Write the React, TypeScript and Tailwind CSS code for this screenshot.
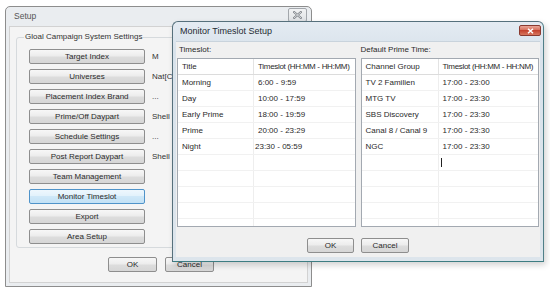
import React from 'react';

const sans = "font-['Liberation_Sans',Arial,sans-serif]";

const setupRows: { label: string; value?: string; focused?: boolean }[] = [
  { label: 'Target Index', value: 'M' },
  { label: 'Universes', value: 'Nat[C' },
  { label: 'Placement Index Brand', value: '...' },
  { label: 'Prime/Off Daypart', value: 'Shell' },
  { label: 'Schedule Settings', value: '...' },
  { label: 'Post Report Daypart', value: 'Shell' },
  { label: 'Team Management' },
  { label: 'Monitor Timeslot', focused: true },
  { label: 'Export' },
  { label: 'Area Setup' },
];

const timeslots = [
  ['Morning', '6:00 - 9:59'],
  ['Day', '10:00 - 17:59'],
  ['Early Prime', '18:00 - 19:59'],
  ['Prime', '20:00 - 23:29'],
  ['Night', '23:30 - 05:59'],
];

const primeTimes = [
  ['TV 2 Familien', '17:00 - 23:00'],
  ['MTG TV', '17:00 - 23:30'],
  ['SBS Discovery', '17:00 - 23:30'],
  ['Canal 8 / Canal 9', '17:00 - 23:30'],
  ['NGC', '17:00 - 23:30'],
];

const WinButton: React.FC<{ label: string; className?: string; focused?: boolean }> = ({ label, className = '', focused }) => (
  <div
    className={`h-[15px] shrink-0 flex items-center justify-center rounded-[2px] border text-[8px] leading-none text-[#2a2a2a] ${
      focused
        ? 'border-[#4f93c9] bg-[linear-gradient(#eef7fd,#e1f1fb_50%,#cfe8f8_50%,#c2e1f5)]'
        : 'border-[#8e8e8e] bg-[linear-gradient(#f7f7f7,#ececec_48%,#dddddd_52%,#d6d6d6)]'
    } ${className}`}
  >
    {label}
  </div>
);

const GridTable: React.FC<{
  headers: [string, string];
  rows: string[][];
  firstWidth: string;
  editRow?: number;
  caretRow?: number;
}> = ({ headers, rows, firstWidth, editRow, caretRow }) => {
  const filled = [...rows, ...Array.from({ length: 10 - rows.length }, () => ['', ''])];
  return (
    <div className="h-[169px] bg-white border border-[#a3a9b1] overflow-hidden flex flex-col text-[8px] text-[#2a2a2a]">
      <div className="h-[16px] shrink-0 flex border-b border-[#dcdcdc]">
        <div className={`${firstWidth} shrink-0 border-r border-[#e3e3e3] pl-[4px] flex items-center`}>{headers[0]}</div>
        <div className="flex-1 min-w-0 pl-[4px] flex items-center whitespace-nowrap tracking-[-0.3px]">{headers[1]}</div>
      </div>
      {filled.map((r, i) => (
        <div key={i} className="h-[16px] shrink-0 flex border-b border-[#f1f1f1]">
          <div className={`${firstWidth} shrink-0 border-r border-[#eeeeee] pl-[4px] flex items-center`}>{r[0]}</div>
          <div className={`flex-1 min-w-0 flex items-center ${i === editRow ? 'pl-[1px]' : 'pl-[4px]'}`}>
            {r[1]}
            {i === caretRow && <span className="ml-[-2px] w-px h-[9px] bg-[#222]" />}
          </div>
        </div>
      ))}
    </div>
  );
};

export default function App() {
  return (
    <div className={`relative w-[550px] h-[292px] bg-white overflow-hidden ${sans}`}>
      {/* Setup dialog (inactive, behind) */}
      <div className="absolute left-[5px] top-[6px] w-[307px] h-[281px] border border-[#8d8d8d] rounded-t-[5px] bg-[#eaedf0] flex flex-col px-[3px] pb-[3px]">
        <div className="h-[19px] shrink-0 flex items-start justify-between">
          <span className="pl-[5px] pt-[5px] text-[8.5px] leading-none text-[#555]">Setup</span>
          <div className="mr-[1px] mt-[1px] w-[19px] h-[14px] rounded-[2px] border border-[#a3a7ac] bg-[linear-gradient(#f2f3f4,#dfe2e5)] flex items-center justify-center">
            <svg width="9" height="8" viewBox="0 0 9 8">
              <path d="M1 1 L8 7 M8 1 L1 7" stroke="#7c8086" strokeWidth="2.2" strokeLinecap="square" />
              <path d="M1 1 L8 7 M8 1 L1 7" stroke="#eef0f2" strokeWidth="0.8" strokeLinecap="square" />
            </svg>
          </div>
        </div>
        <div className="flex-1 bg-[#f4f4f4] border border-[#d2d2d2] flex flex-col">
          <div className="relative mt-[10px] ml-[6px] mr-[6px] border border-[#d6dadd] rounded-[3px] pt-[11px] pb-[3px] pl-[12px] flex flex-col gap-[5px]">
            <span className="absolute left-[7px] top-[-6px] px-[1px] bg-[#f4f4f4] text-[8px] leading-[10px] text-[#333]">
              Gloal Campaign System Settings
            </span>
            {setupRows.map((r) => (
              <div key={r.label} className="flex items-center">
                <WinButton label={r.label} focused={r.focused} className="w-[116px]" />
                {r.value && <span className="ml-[7px] text-[8px] text-[#333] whitespace-nowrap">{r.value}</span>}
              </div>
            ))}
          </div>
          <div className="mt-[9px] pl-[98px] flex gap-[8px]">
            <WinButton label="OK" className="w-[49px]" />
            <WinButton label="Cancel" className="w-[49px]" />
          </div>
        </div>
      </div>

      {/* Monitor Timeslot Setup dialog (active) */}
      <div className="absolute left-[172px] top-[21px] w-[372px] h-[241px] border border-[#56707c] border-b-[#3d7d82] border-r-[#4f7f88] rounded-t-[6px] bg-[linear-gradient(#e4ebf2,#d8e2eb_30px,#dde5ec)] flex flex-col px-[3px] pb-[4px] shadow-[2px_3px_6px_rgba(0,0,0,0.18)]">
        <div className="h-[19px] shrink-0 flex items-start justify-between">
          <span className="pl-[4px] pt-[5px] text-[9px] leading-none text-[#1f2a33]">Monitor Timeslot Setup</span>
          <div className="mt-[3px] mr-[-1px] w-[22px] h-[11px] rounded-[2px] border border-[#8a3a30] bg-[linear-gradient(#e9a597,#d66b57_50%,#c4432f_50%,#d8765e)] flex items-center justify-center">
            <svg width="7" height="6" viewBox="0 0 7 6">
              <path d="M1 0.8 L6 5.2 M6 0.8 L1 5.2" stroke="#fff" strokeWidth="1.5" />
            </svg>
          </div>
        </div>
        <div className="flex-1 bg-[#f0f0f0] border-t border-[#c9d3dc] flex flex-col px-[1px]">
          <div className="flex gap-[5px] pt-[3px]">
            <div className="flex-1 min-w-0 flex flex-col">
              <span className="ml-[2px] h-[13px] text-[8px] leading-[10px] text-[#2a2a2a]">Timeslot:</span>
              <GridTable headers={['Title', 'Timeslot (HH:MM - HH:MM)']} rows={timeslots} firstWidth="w-[76px]" editRow={4} />
            </div>
            <div className="flex-1 min-w-0 flex flex-col">
              <span className="h-[13px] text-[8px] leading-[10px] text-[#2a2a2a]">Default Prime Time:</span>
              <GridTable headers={['Channel Group', 'Timeslot (HH:MM - HH:NM)']} rows={primeTimes} firstWidth="w-[77px]" caretRow={5} />
            </div>
          </div>
          <div className="mt-[11px] flex justify-center gap-[7px]">
            <WinButton label="OK" className="w-[47px]" />
            <WinButton label="Cancel" className="w-[48px]" />
          </div>
        </div>
      </div>
    </div>
  );
}
